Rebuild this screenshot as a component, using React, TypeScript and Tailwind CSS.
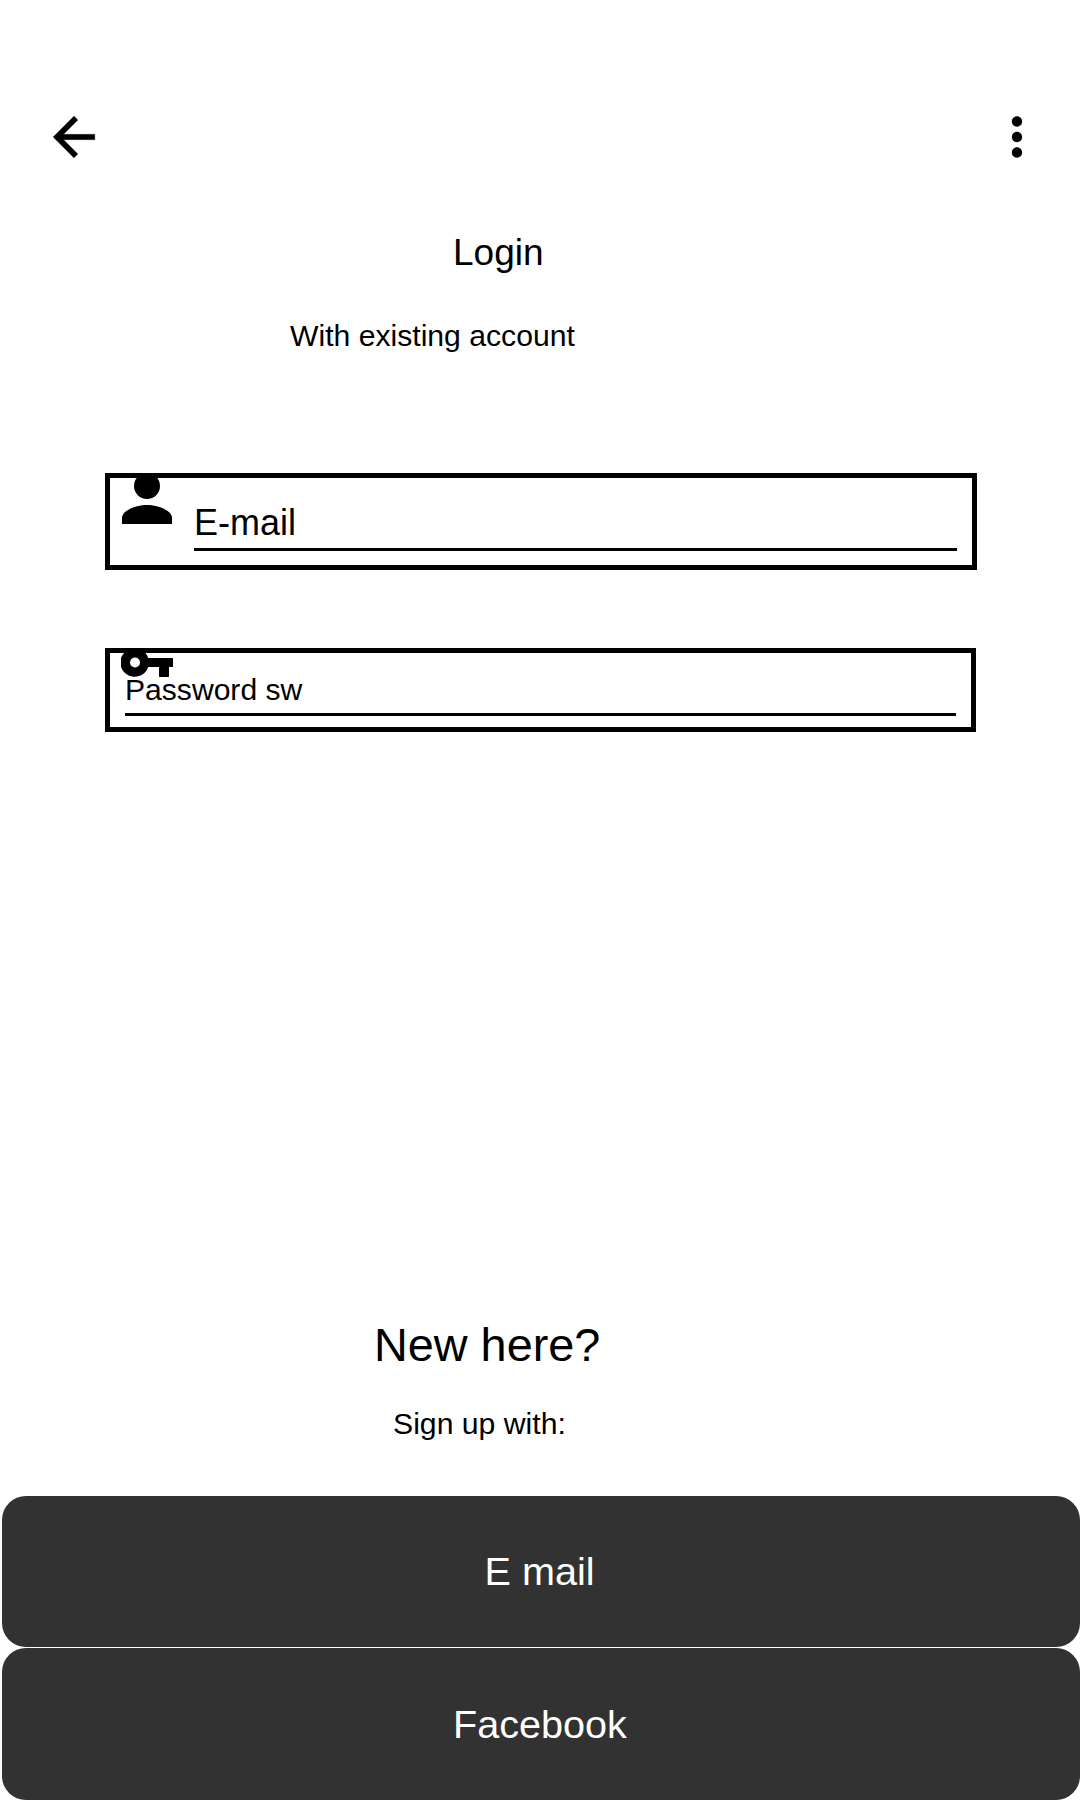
export default function App() {
  return (
    <main className="flex h-[1800px] w-[1080px] flex-col overflow-hidden bg-white text-black" style={{ fontFamily: '"Liberation Sans", Arial, sans-serif' }}>
      <header className="flex h-[170px] items-start justify-between pt-[106px] pr-[32px] pl-[43px]">
        <button aria-label="Back">
          <svg className="h-[62px] w-[62px]" viewBox="0 0 24 24"><path stroke="black" strokeWidth=".25" d="M20 11H7.83l5.59-5.59L12 4l-8 8 8 8 1.41-1.41L7.83 13H20v-2z" /></svg>
        </button>
        <button aria-label="More">
          <svg className="h-[62px] w-[62px]" viewBox="0 0 24 24"><path d="M12 8c1.1 0 2-.9 2-2s-.9-2-2-2-2 .9-2 2 .9 2 2 2zm0 2c-1.1 0-2 .9-2 2s.9 2 2 2 2-.9 2-2-.9-2-2-2zm0 6c-1.1 0-2 .9-2 2s.9 2 2 2 2-.9 2-2-.9-2-2-2z" /></svg>
        </button>
      </header>
      <h1 className="mt-[62px] ml-[453px] text-[37px] leading-[42px]">Login</h1>
      <p className="mt-[45px] ml-[290px] text-[30.15px] leading-[34px]">With existing account</p>
      <section className="mt-[120px] ml-[105px] flex h-[97px] w-[872px] border-[5px] border-black">
        <svg className="-mt-1 ml-[12px] h-[50px] w-[50px]" viewBox="0 0 50 50"><circle cx="25" cy="12" r="13" /><path d="M0 50v-6c0-8 15-13 25-13s25 5 25 13v6z" /></svg>
        <div className="ml-[22px] h-[73px] w-[763px] border-b-[3px] border-black pt-[24px] text-[36px] leading-[42px]">E-mail</div>
      </section>
      <section className="relative mt-[78px] ml-[105px] flex h-[84px] w-[871px] border-[5px] border-black">
        <svg className="absolute -top-[5px] left-[11px] h-[29px] w-[52px]" viewBox="0 0 52 29"><path fillRule="evenodd" d="M27.2 10H52v9h-4v10H38V19H27.2A14.3 14.3 0 1 1 27.2 10zM14 9.5a5 5 0 1 0 0 10a5 5 0 0 0 0-10z" /></svg>
        <div className="ml-[15px] h-[63px] w-[831px] border-b-[3px] border-black pt-[19px] text-[30.1px] leading-[36px]">Password sw</div>
      </section>
      <h2 className="mt-[586px] ml-[374px] text-[46.8px] leading-[54px]">New here?</h2>
      <p className="mt-[35px] ml-[393px] text-[30.2px] leading-[34px]">Sign up with:</p>
      <footer className="mt-auto flex flex-col gap-px pl-[2px]">
        <button className="h-[151px] rounded-[24px] bg-[#323232] pr-[3px] text-[39.6px] text-white">E mail</button>
        <button className="h-[152px] rounded-[24px] bg-[#323232] pt-[1px] pr-[2px] text-[39.6px] text-white">Facebook</button>
      </footer>
    </main>
  );
}
